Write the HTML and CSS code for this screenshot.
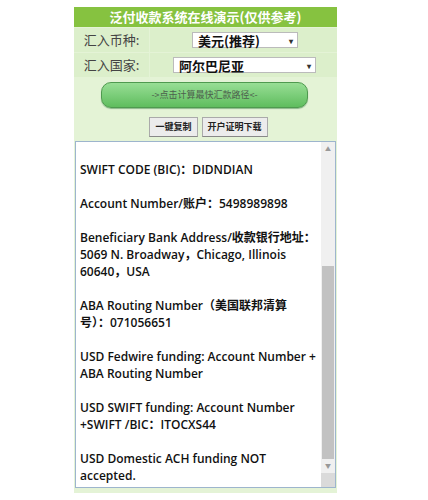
FILE: index.html
```html
<!DOCTYPE html>
<html>
<head>
<meta charset="utf-8">
<link rel="stylesheet" href="styles.css">
</head>
<body>
<div class="wrap">
  <div class="title">泛付收款系统在线演示(仅供参考)</div>
  <div class="row">
    <div class="label">汇入币种:</div>
    <div class="value"><div class="sel sel1"><span>美元(推荐)</span><i>▾</i></div></div>
  </div>
  <div class="row">
    <div class="label">汇入国家:</div>
    <div class="value"><div class="sel sel2"><span>阿尔巴尼亚</span><i>▾</i></div></div>
  </div>
  <div class="calc-row"><div class="calc">-&gt;点击计算最快汇款路径&lt;-</div></div>
  <div class="btn-row"><div class="btn">一键复制</div><div class="btn">开户证明下载</div></div>
  <div class="box">
    <div class="text">SWIFT CODE (BIC)：DIDNDIAN<br>
<br>
Account Number/账户：5498989898<br>
<br>
Beneficiary Bank Address/收款银行地址：5069 N. Broadway，Chicago, Illinois 60640，USA<br>
<br>
ABA Routing Number（美国联邦清算号）：071056651<br>
<br>
USD Fedwire funding: Account Number + ABA Routing Number<br>
<br>
USD SWIFT funding: Account Number +SWIFT /BIC：ITOCXS44<br>
<br>
USD Domestic ACH funding NOT accepted.</div>
    <div class="scroll">
      <div class="arrow up">▲</div>
      <div class="track"><div class="thumb"></div></div>
      <div class="arrow down">▼</div>
      <div class="grip"></div>
    </div>
  </div>
</div>
</body>
</html>
```
FILE: styles.css
```css
html, body { margin: 0; padding: 0; background: #fff; }
body { font-family: "Noto Sans CJK SC", sans-serif; }
.wrap {
  width: 263px;
  margin: 7px 0 0 74px;
  background: #e4f3d6;
  padding-bottom: 5px;
}
.title {
  height: 20px;
  background: #86c240;
  color: #fff;
  font-weight: bold;
  font-size: 13px;
  line-height: 20px;
  text-align: center;
  margin-bottom: 1px;
}
.row {
  display: flex;
  height: 24px;
  margin-bottom: 1px;
}
.label {
  width: 75px;
  background: #dcefcb;
  color: #444;
  font-size: 13px;
  line-height: 24px;
  text-align: center;
  margin-right: 1px;
}
.value {
  flex: 1;
  background: #dcefcb;
  display: flex;
  align-items: center;
}
.sel {
  height: 16px;
  background: #fff;
  border: 1px solid #bbb;
  display: flex;
  align-items: center;
  justify-content: space-between;
  font-weight: bold;
  font-size: 13px;
  color: #111;
  box-sizing: border-box;
  padding: 0 4px 0 5px;
}
.sel i { font-style: normal; font-size: 8px; color: #333; }
.sel1 { width: 106px; margin-left: 42px; }
.sel2 { width: 143px; margin-left: 23px; }
.calc-row {
  display: flex;
  justify-content: center;
  padding: 4px 0 4px;
}
.calc {
  width: 205px;
  height: 24px;
  border: 1px solid #4f9a4f;
  border-radius: 10px;
  background: linear-gradient(#98de95, #5fbd5e);
  color: #4d5f4d;
  font-size: 9px;
  line-height: 24px;
  text-align: center;
  box-shadow: 0 1px 1px #8ab88a;
  margin-left: -2px;
}
.btn-row {
  display: flex;
  justify-content: center;
  gap: 4px;
  padding: 5px 0 4px;
  margin-left: 6px;
}
.btn {
  height: 18px;
  padding: 0 5px;
  background: #ececec;
  border: 1px solid #aaa;
  border-bottom-color: #888;
  font-size: 9px;
  font-weight: bold;
  line-height: 18px;
  color: #222;
}
.box {
  display: flex;
  height: 345px;
  margin: 0 1px;
  background: #fff;
  border: 1px solid #9db5cd;
  overflow: hidden;
}
.text {
  flex: 1;
  padding: 19px 4px 0;
  font-family: "Open Sans", "Noto Sans CJK SC", sans-serif;
  font-weight: 600;
  font-size: 12px;
  line-height: 17px;
  color: #111;
}
.scroll {
  width: 14px;
  display: flex;
  flex-direction: column;
  background: #f0f0f0;
}
.arrow {
  height: 14px;
  font-size: 6px;
  color: #999;
  text-align: center;
  line-height: 14px;
}
.track { flex: 1; display: flex; flex-direction: column; justify-content: flex-end; }
.thumb { height: 193px; background: #c2c2c2; margin: 0 1px; }
.grip { height: 14px; background: #dadada; }
```
